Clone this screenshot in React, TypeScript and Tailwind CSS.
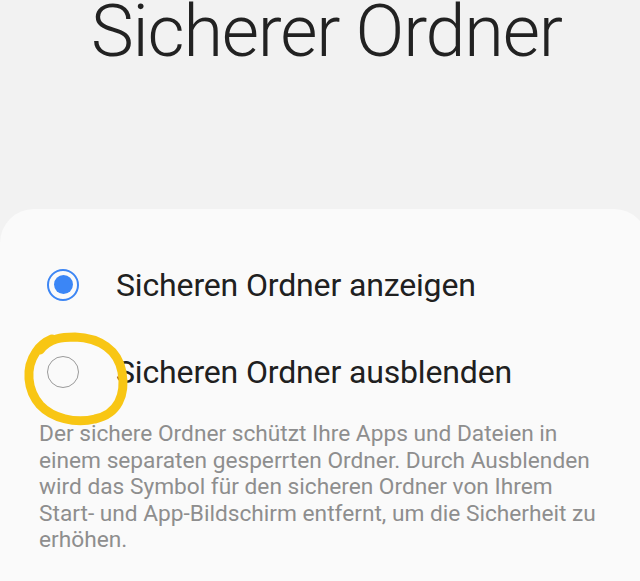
import React from 'react';

function Radio({ checked }: { checked: boolean }) {
  if (checked) {
    return (
      <div className="flex h-8 w-8 shrink-0 items-center justify-center rounded-full border-2 border-[#3d86f4]">
        <div className="h-[19px] w-[19px] rounded-full bg-[#3b86f6]" />
      </div>
    );
  }
  return <div className="h-8 w-8 shrink-0 rounded-full border-[1.5px] border-[#9a9a9a]" />;
}

function Option({ label, checked }: { label: string; checked: boolean }) {
  return (
    <div className="flex h-[87px] items-center pl-[47px]">
      <Radio checked={checked} />
      <span className="ml-[37px] text-[32px] leading-none tracking-[-0.15px] text-[#202020]">{label}</span>
    </div>
  );
}

export default function App() {
  return (
    <div
      className="relative flex h-[581px] w-[640px] flex-col overflow-hidden bg-[#f2f2f2]"
      style={{ fontFamily: 'Roboto, "Noto Sans", sans-serif' }}
    >
      <div className="flex h-[209px] shrink-0 flex-col pl-[91px]">
        <h1 className="-mt-1 text-[72px] font-light leading-[72px] tracking-[-1.2px] text-[#222222]">
          Sicherer Ordner
        </h1>
      </div>

      <div className="w-[648px] flex-1 rounded-t-[34px] bg-[#fafafa] pt-[32px]">
        <Option label="Sicheren Ordner anzeigen" checked />
        <Option label="Sicheren Ordner ausblenden" checked={false} />
        <p className="mt-[6px] pl-[39px] text-[22.7px] leading-[26.5px] text-[#8e8e8e]">
          Der sichere Ordner schützt Ihre Apps und Dateien in
          <br />
          einem separaten gesperrten Ordner. Durch Ausblenden
          <br />
          wird das Symbol für den sicheren Ordner von Ihrem
          <br />
          Start- und App-Bildschirm entfernt, um die Sicherheit zu
          <br />
          erhöhen.
        </p>
      </div>

      {/* hand-drawn highlight */}
      <svg className="pointer-events-none absolute left-0 top-0" width="640" height="581" viewBox="0 0 640 581">
        <path
          d="M 40 350 C 50 338, 62 337, 75 337 C 100 338, 118 350, 122 372 C 126 395, 118 414, 95 419 C 75 424, 52 418, 40 405 C 27 390, 25 368, 36 352 C 40 346, 45 342, 52 339"
          fill="none"
          stroke="#f8c614"
          strokeWidth="9"
          strokeLinecap="round"
        />
      </svg>
    </div>
  );
}
